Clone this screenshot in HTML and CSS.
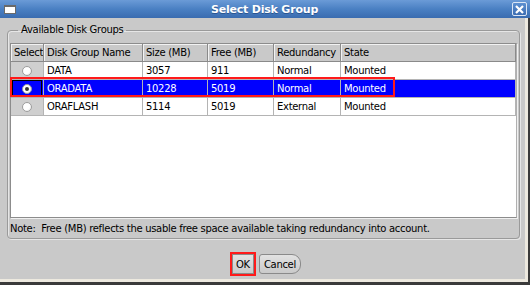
FILE: index.html
```html
<!DOCTYPE html>
<html>
    <head>
        <meta charset="utf-8">
        <title>Select Disk Group</title>
        <link rel="stylesheet" href="styles.css">
    </head>
    <body>
        <div class="window">
            <header class="titlebar">
                <span class="win-icon"></span>
                <h1 class="win-title">Select Disk Group</h1>
                <span class="win-close">
                    <svg width="9" height="9" viewBox="0 0 9 9"><path d="M1 1 L8 8 M8 1 L1 8" stroke="#fff" stroke-width="2.2"/></svg>
                </span>
            </header>
            <div class="win-body">
                <fieldset class="dg-group">
                    <legend>Available Disk Groups</legend>
                    <div class="dg-grid">
                        <table class="dg-table">
                            <thead>
                                <tr>
                                    <th class="c-sel">Select</th>
                                    <th class="c-name">Disk Group Name</th>
                                    <th class="c-size">Size (MB)</th>
                                    <th class="c-free">Free (MB)</th>
                                    <th class="c-red">Redundancy</th>
                                    <th class="c-state">State</th>
                                </tr>
                            </thead>
                            <tbody>
                                <tr>
                                    <td class="c-sel"><span class="radio"></span></td>
                                    <td>DATA</td>
                                    <td>3057</td>
                                    <td>911</td>
                                    <td>Normal</td>
                                    <td>Mounted</td>
                                </tr>
                                <tr class="selected">
                                    <td class="c-sel"><span class="focus"><span class="radio on"></span></span></td>
                                    <td>ORADATA</td>
                                    <td>10228</td>
                                    <td>5019</td>
                                    <td>Normal</td>
                                    <td>Mounted</td>
                                </tr>
                                <tr>
                                    <td class="c-sel"><span class="radio"></span></td>
                                    <td>ORAFLASH</td>
                                    <td>5114</td>
                                    <td>5019</td>
                                    <td>External</td>
                                    <td>Mounted</td>
                                </tr>
                            </tbody>
                        </table>
                        <div class="red-box"></div>
                    </div>
                    <p class="dg-note">Note:&nbsp; Free (MB) reflects the usable free space available taking redundancy into account.</p>
                </fieldset>
                <div class="win-buttons">
                    <button class="btn btn-ok">OK</button>
                    <button class="btn btn-cancel">Cancel</button>
                </div>
            </div>
        </div>
    </body>
</html>
```

FILE: styles.css
```css
html, body {
    margin: 0;
    padding: 0;
}
body {
    width: 530px;
    height: 285px;
    overflow: hidden;
    font-family: "DejaVu Sans", sans-serif;
    font-size: 10px;
    letter-spacing: -0.3px;
    color: #000;
}
.window {
    width: 530px;
    height: 285px;
    display: flex;
    flex-direction: column;
}
.titlebar {
    height: 18px;
    flex: none;
    display: flex;
    align-items: center;
    background: linear-gradient(#6b9bd7, #4a80c3 50%, #3a6cb0);
}
.win-icon {
    width: 10px;
    height: 6px;
    margin-left: 4px;
    background: #fff;
    border: 1px solid #6a6a6a;
    border-top-width: 2px;
}
.win-title {
    flex: 1;
    margin: 0 0 0 1px;
    text-align: center;
    color: #fff;
    font-size: 11px;
    font-weight: bold;
    letter-spacing: -0.2px;
    text-shadow: 0 1px 0 #2a5590;
}
.win-close {
    width: 13px;
    height: 12px;
    margin-right: 3px;
    display: flex;
    align-items: center;
    justify-content: center;
    border: 1px solid #dbe6f5;
    border-radius: 2px;
    background: linear-gradient(#5d90d0, #3c6db2);
}
.win-body {
    flex: 1;
    display: flex;
    flex-direction: column;
    background: #c9c9c9;
    border-right: 2px solid #3a3a3a;
    border-bottom: 3px solid #3a3a3a;
    box-shadow: inset -3px -3px 0 #ede9df;
    padding: 6px 5px 0 7px;
}
.dg-group {
    margin: 0;
    padding: 7px 2px 3px 2px;
    width: 512px;
    box-sizing: border-box;
    border: 1px solid #9a9a9a;
    border-radius: 4px;
    box-shadow: inset 1px 1px 0 #e6e6e6, 1px 1px 0 #e6e6e6;
}
.dg-group legend {
    padding: 0 3px;
    margin-left: 8px;
    font-size: 10px;
    line-height: 12px;
}
.dg-grid {
    position: relative;
    height: 173px;
    background: #fff;
    border: 1px solid #8c8c8c;
    border-right-color: #b0b0b0;
    box-shadow: 1px 1px 0 #f0f0f0;
}
.dg-table {
    border-collapse: collapse;
    width: 505px;
    table-layout: fixed;
}
.dg-table th {
    height: 17px;
    padding: 0 3px;
    text-align: left;
    font-weight: normal;
    background: #c9c9c9;
    border-right: 1px solid #8a8a8a;
    border-bottom: 1px solid #8a8a8a;
    box-shadow: inset 1px 1px 0 #f2f2f2;
    white-space: nowrap;
    overflow: hidden;
}
.dg-table td {
    height: 17px;
    padding: 0 3px;
    border-right: 1px solid #b4b4b4;
    border-bottom: 1px solid #b4b4b4;
    white-space: nowrap;
}
.dg-table .c-sel { width: 26px; text-align: center; }
.dg-table .c-name { width: 92px; }
.dg-table .c-size { width: 58px; }
.dg-table .c-free { width: 59px; }
.dg-table .c-red { width: 60px; }
.dg-table td.c-sel {
    background: #cfcfcf;
    padding: 0;
}
.dg-table tr.selected td,
.dg-table tr.selected td.c-sel {
    background: #0000ff;
    color: #fff;
}
.focus {
    display: flex;
    align-items: center;
    justify-content: center;
    height: 15px;
    margin: 0 1px;
    border: 1px solid #000;
}
.radio {
    display: inline-block;
    width: 8px;
    height: 8px;
    border-radius: 50%;
    background: radial-gradient(circle at 40% 40%, #fff 50%, #d8d8d8);
    border: 1px solid #9c9c9c;
    vertical-align: middle;
    position: relative;
}
.radio.on::after {
    content: "";
    position: absolute;
    left: 2px;
    top: 2px;
    width: 4px;
    height: 4px;
    border-radius: 50%;
    background: #333;
}
.red-box {
    position: absolute;
    left: -1px;
    top: 33px;
    width: 381px;
    height: 16px;
    border: 2px solid #ff1a1a;
    pointer-events: none;
}
.dg-note {
    margin: 5px 0 0 0;
    line-height: 12px;
    white-space: nowrap;
}
.win-buttons {
    display: flex;
    justify-content: center;
    gap: 5px;
    margin-top: 15px;
    padding-left: 3px;
}
.btn {
    font-family: "DejaVu Sans", sans-serif;
    font-size: 10px;
    letter-spacing: -0.3px;
    height: 20px;
    padding: 0 4px;
    background: linear-gradient(#e2e2e2, #cacaca);
    border: 1px solid #8a8a8a;
    border-radius: 3px;
    color: #000;
}
.btn-ok {
    outline: 2px solid #ff1a1a;
    outline-offset: 0;
    padding: 0 3px;
    border-radius: 0;
}
.btn-cancel {
    border-radius: 3px 9px 9px 3px;
}
```
